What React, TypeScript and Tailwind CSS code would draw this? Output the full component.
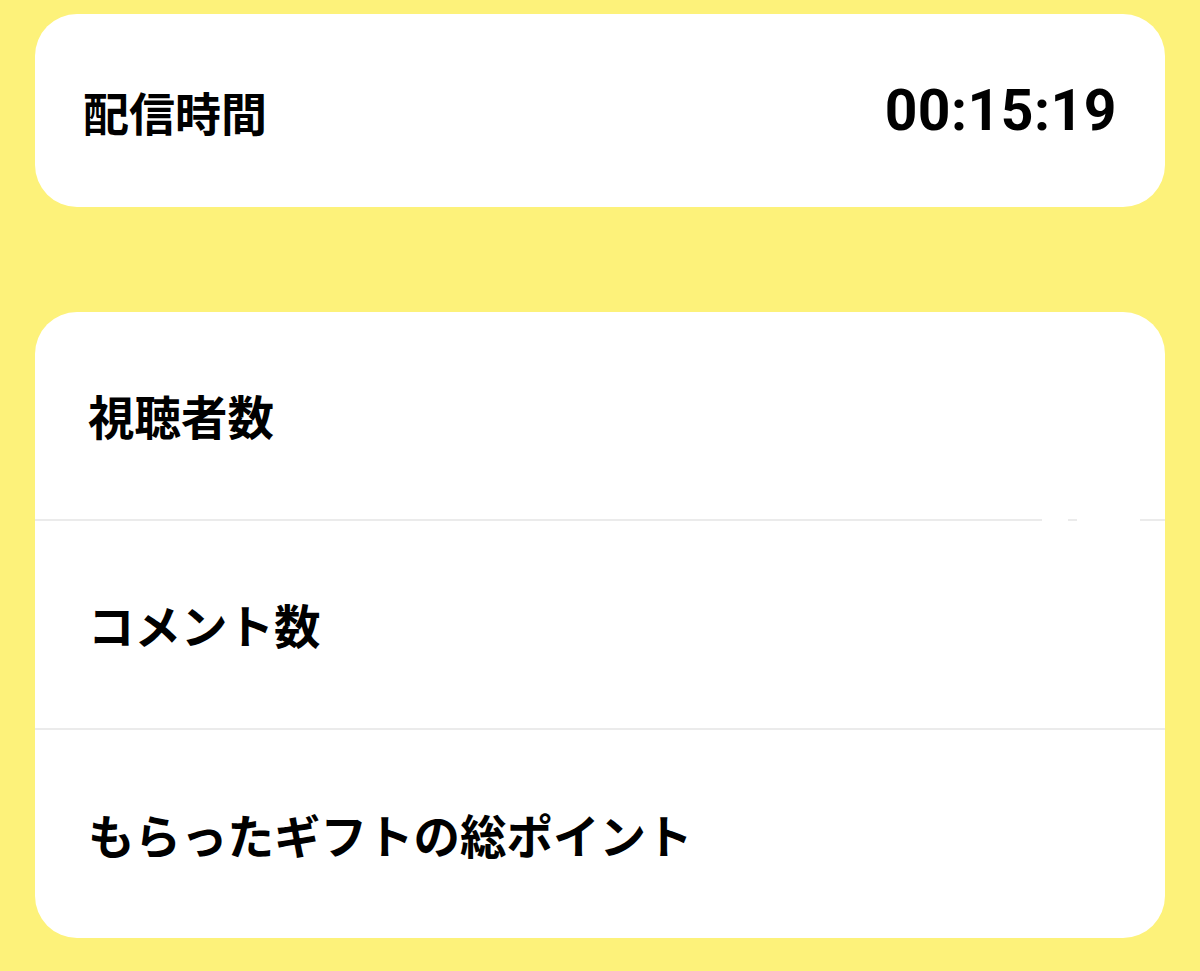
import React from 'react';

const rows = ['視聴者数', 'コメント数', 'もらったギフトの総ポイント'];

function App() {
  return (
    <div
      className="min-h-[971px] bg-[#fdf27a] px-[35px] pt-[14px] pb-[33px] text-black"
      style={{ fontFamily: '"Noto Sans CJK JP", "Noto Sans", sans-serif' }}
    >
      {/* Stream time */}
      <div className="flex h-[193px] items-center justify-between rounded-[42px] bg-white pl-[48px] pr-[48px]">
        <span className="text-[46px] font-bold leading-none">配信時間</span>
        <span className="font-['Roboto',sans-serif] text-[57px] font-bold leading-none tracking-[0.5px]">00:15:19</span>
      </div>

      {/* Stats */}
      <div className="mt-[105px] overflow-hidden rounded-[42px] bg-white">
        {rows.map((label, i) => (
          <div key={label}>
            {i > 0 && (
              <div className="flex h-[2px]">
                <div className="flex-1 bg-[#ebebeb]" />
                {i === 1 && (
                  <>
                    <div className="w-[26px] bg-white" />
                    <div className="w-[9px] bg-[#ebebeb]" />
                    <div className="w-[63px] bg-white" />
                    <div className="w-[25px] bg-[#ebebeb]" />
                  </>
                )}
              </div>
            )}
            <div className={`flex items-center pl-[53px] ${i === 2 ? 'h-[208px]' : 'h-[207px]'}`}>
              <span className="text-[46.5px] font-bold leading-none">{label}</span>
            </div>
          </div>
        ))}
      </div>
    </div>
  );
}

export default App;
